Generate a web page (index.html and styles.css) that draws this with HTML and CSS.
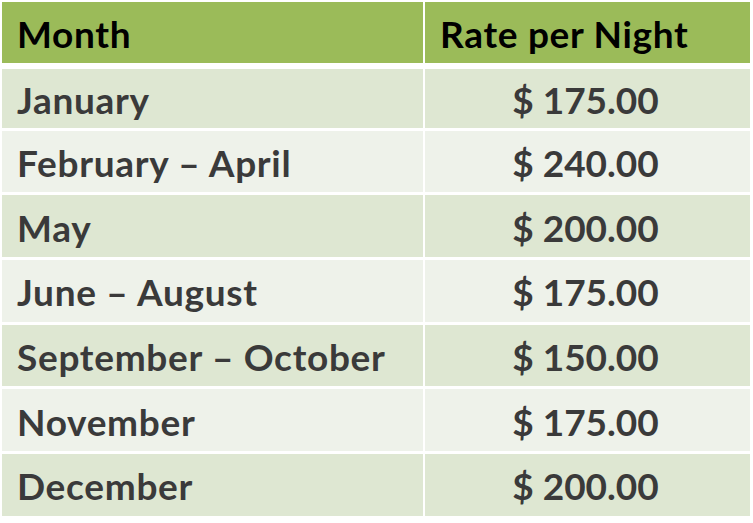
FILE: index.html
```html
<!DOCTYPE html>
<html>
<head>
<meta charset="utf-8">
<link rel="stylesheet" href="styles.css">
</head>
<body>
<div class="rates">
  <div class="cell head">Month</div>
  <div class="cell head">Rate per Night</div>
  <div class="cell odd first">January</div>
  <div class="cell odd first price">$ 175.00</div>
  <div class="cell even">February – April</div>
  <div class="cell even price">$ 240.00</div>
  <div class="cell odd">May</div>
  <div class="cell odd price">$ 200.00</div>
  <div class="cell even">June – August</div>
  <div class="cell even price">$ 175.00</div>
  <div class="cell odd">September – October</div>
  <div class="cell odd price">$ 150.00</div>
  <div class="cell even">November</div>
  <div class="cell even price">$ 175.00</div>
  <div class="cell odd">December</div>
  <div class="cell odd price">$ 200.00</div>
</div>
</body>
</html>
```
FILE: styles.css
```css
html, body {
  margin: 0;
  padding: 0;
  background: #ffffff;
}
body {
  padding: 2px 0 0 2px;
}
.rates {
  display: grid;
  grid-template-columns: 421px 325px;
  grid-template-rows: 61px repeat(7, 61.7px);
  column-gap: 2px;
  row-gap: 3px;
  font-family: Lato, "Open Sans", sans-serif;
  font-weight: 700;
  font-size: 37px;
  letter-spacing: 0.7px;
}
.cell {
  display: flex;
  align-items: center;
  padding-left: 15px;
  padding-top: 2px;
  color: #3a3a3a;
}
.head {
  background: #9bbb59;
  color: #000000;
}
.first {
  margin-top: 3px;
}
.odd {
  background: #dee7d2;
}
.even {
  background: #eef2ea;
}
.price {
  justify-content: center;
  padding-left: 0;
  padding-right: 4px;
  letter-spacing: 0;
}
```
